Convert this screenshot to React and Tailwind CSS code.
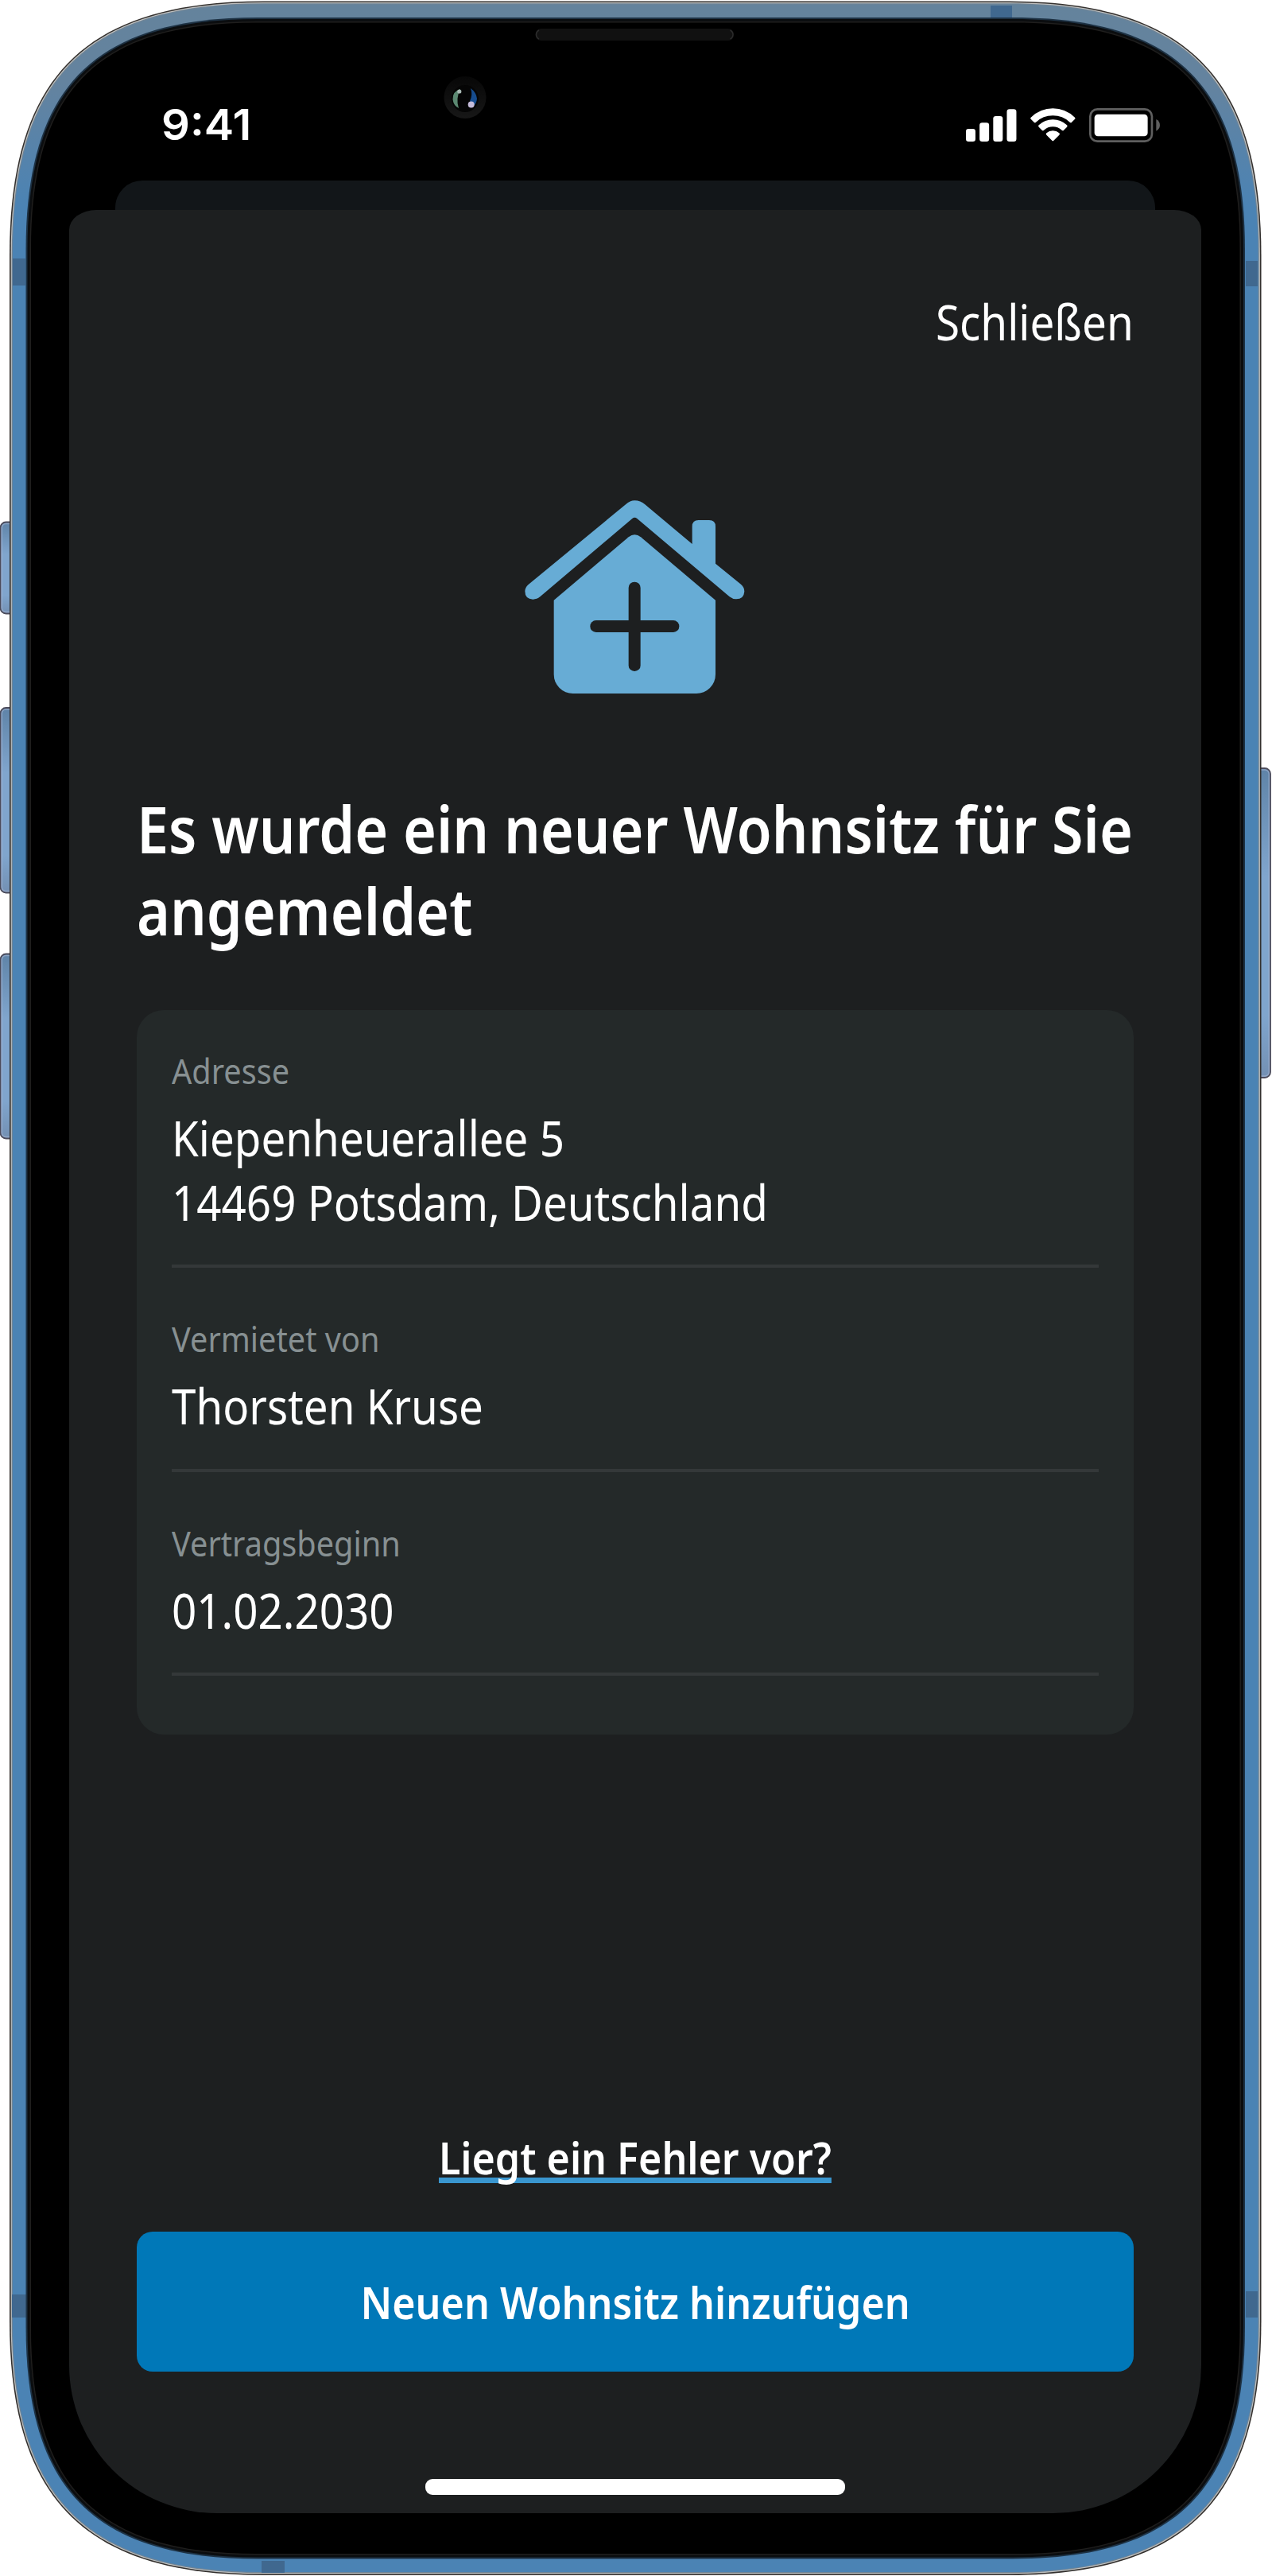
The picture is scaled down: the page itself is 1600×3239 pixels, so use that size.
const DETAILS = [
  { label: 'Adresse', lines: ['Kiepenheuerallee 5', '14469 Potsdam, Deutschland'] },
  { label: 'Vermietet von', lines: ['Thorsten Kruse'] },
  { label: 'Vertragsbeginn', lines: ['01.02.2030'] },
]

const SIDE_BUTTONS = [
  { x: 0.5, y: 656.5, height: 115 },
  { x: 0.5, y: 890, height: 232.5 },
  { x: 0.5, y: 1199.5, height: 232 },
  { x: 1574, y: 966, height: 389 },
]

const ANTENNA_BANDS = [
  { x: 16, y: 325, width: 16, height: 34 },
  { x: 1567, y: 328, width: 15, height: 32 },
  { x: 15, y: 2885, width: 18, height: 29 },
  { x: 1567, y: 2881, width: 15, height: 33 },
  { x: 1246, y: 7, width: 27, height: 17 },
  { x: 329, y: 3220, width: 29, height: 15 },
]

const BEZEL_LAYERS = [
  { inset: 0, fill: '#33302e' },
  { inset: 1.6, fill: '#bfc0bf' },
  { inset: 2.8, fill: '#6f8496' },
  { inset: 4, fill: 'url(#aluminium)' },
]

const GLASS_LAYERS = [
  { inset: 20.5, fill: '#1d3143' },
  { inset: 22.5, fill: '#0b0d0f' },
  { inset: 25.5, fill: '#1f1e1d' },
  { inset: 27, fill: '#000000' },
]

// continuous-curvature rounded rectangle, shrunk by `inset`
function contour(inset) {
  const l = 12 + inset
  const t = 1.5 + inset
  const r = 1586.5 - inset
  const b = 3238 - inset
  const e = 320 - inset * 1.35
  const k = e * 0.297
  return [
    `M${l} ${t + e}`,
    `C${l} ${t + k} ${l + k} ${t} ${l + e} ${t}`,
    `H${r - e}`,
    `C${r - k} ${t} ${r} ${t + k} ${r} ${t + e}`,
    `V${b - e}`,
    `C${r} ${b - k} ${r - k} ${b} ${r - e} ${b}`,
    `H${l + e}`,
    `C${l + k} ${b} ${l} ${b - k} ${l} ${b - e}`,
    'Z',
  ].join(' ')
}

function DeviceFrame() {
  return (
    <svg className="absolute inset-0" width="1600" height="3239" viewBox="0 0 1600 3239" aria-hidden="true">
      <defs>
        <linearGradient id="aluminium" gradientUnits="userSpaceOnUse" x1="0" y1="0" x2="0" y2="260">
          <stop offset="0" stopColor="#64839c" />
          <stop offset="0.4" stopColor="#64839f" />
          <stop offset="1" stopColor="#4b83b4" />
        </linearGradient>
        <linearGradient id="button" x1="0" y1="0" x2="0" y2="1">
          <stop offset="0" stopColor="#5f84a8" />
          <stop offset="0.35" stopColor="#80a5cd" />
          <stop offset="0.8" stopColor="#80a5cd" />
          <stop offset="1" stopColor="#7390b3" />
        </linearGradient>
        <linearGradient id="lens" x1="0" y1="0" x2="0" y2="1">
          <stop offset="0" stopColor="#070707" />
          <stop offset="1" stopColor="#171717" />
        </linearGradient>
      </defs>

      {SIDE_BUTTONS.map(b => (
        <g key={b.y}>
          <rect x={b.x} y={b.y} width="24" height={b.height} rx="7" fill="url(#button)" stroke="#4c4c5c" strokeWidth="1.8" />
          <rect x={b.x + 1.8} y={b.y + 2} width="20.4" height={b.height - 4} rx="5" fill="none" stroke="#a9b8d6" strokeWidth="1.4" opacity="0.6" />
        </g>
      ))}

      {BEZEL_LAYERS.map(layer => <path key={layer.inset} d={contour(layer.inset)} fill={layer.fill} />)}
      {ANTENNA_BANDS.map(band => <rect key={`${band.x}-${band.y}`} {...band} fill="#40688f" />)}
      {GLASS_LAYERS.map(layer => <path key={layer.inset} d={contour(layer.inset)} fill={layer.fill} />)}

      {/* speaker slot */}
      <rect x="673.5" y="36" width="249.5" height="15" rx="7" fill="#111" />
      <path d="M678 38Q674.5 40 674.5 43.5T678 49M918.5 38Q922 40 922 43.5T918.5 49" fill="none" stroke="#2c2c2c" strokeWidth="1.5" />

      {/* front camera */}
      <circle cx="585" cy="122.5" r="26.5" fill="url(#lens)" />
      <circle cx="585" cy="124" r="17" fill="#050505" />
      <path d="M579 112Q569 115 569.5 125Q570.5 133 577 136Q573 124 579 112Z" fill="#5b8871" />
      <path d="M592 111Q599 116 600 124Q599.5 130 595 134L591 127Q595 119 592 111Z" fill="#164c8e" />
      <circle cx="577.8" cy="115" r="2.6" fill="#a9bab4" />
      <circle cx="592.7" cy="131.5" r="4" fill="#c6bddb" />
    </svg>
  )
}

function SignalIcon() {
  return (
    <svg width="63.3" height="43" viewBox="343 408 190 129" fill="#fff">
      <rect x="343" y="486" width="36" height="48" rx="10" />
      <rect x="394.5" y="463" width="36" height="71" rx="10" />
      <rect x="446" y="438" width="36" height="96" rx="10" />
      <rect x="497.5" y="412" width="36" height="122" rx="10" />
    </svg>
  )
}

function WifiIcon() {
  return (
    <svg width="56.7" height="43" viewBox="585 408 170 129" fill="#fff">
      <path d="M587 443Q623 409 670 409T753 443Q756 446 753 449L741 461Q738 464 734 461Q707 436 670 436T606 461Q602 464 599 461L587 449Q584 446 587 443Z" />
      <path d="M617 472Q640 451 670 451T723 472Q727 475 723 479L711 491Q708 494 704 491Q689 478 670 478T636 491Q632 494 629 491L617 479Q613 475 617 472Z" />
      <path d="M646 502Q656 493 670 493T694 502Q698 506 694 509L673 530Q670 533 667 530L646 509Q642 506 646 502Z" />
    </svg>
  )
}

function BatteryIcon() {
  return (
    <svg width="89.3" height="43" viewBox="810 408 268 129">
      <rect x="814" y="412" width="233" height="121" rx="27" fill="none" stroke="#5f5f5f" strokeWidth="8" />
      <rect x="830" y="431" width="201" height="83" rx="13" fill="#fff" />
      <path d="M1063 450Q1077 457 1077 472T1063 494Z" fill="#5f5f5f" />
    </svg>
  )
}

function HouseIcon() {
  return (
    <svg className="mx-auto mt-[184px] block" width="278" height="246" viewBox="120 144 834 738" fill="#67acd5">
      <path d="M502 162Q517 148 535 148Q557 148 573 162L752 312V246Q752 222 776 222H816Q840 222 840 246V386L936 464Q949 475 949 491Q947 520 918 520Q904 520 893 511L544 216Q535 208 526 216L178 511Q166 521 151 521Q121 520 121 490Q122 476 133 466Z" />
      <path d="M230 524L512 286Q535 268 558 286L840 524V804A72 72 0 0 1 768 876H302A72 72 0 0 1 230 804Z" />
      <rect x="512" y="455" width="45" height="337" rx="22" fill="#1d1f20" />
      <rect x="367" y="600" width="336" height="45" rx="22" fill="#1d1f20" />
    </svg>
  )
}

function Detail({ label, lines }) {
  return (
    <div className="border-b-[4px] border-[#343839] pb-[39px]">
      <p className="origin-left scale-x-[0.912] text-[43.5px] leading-[60px] text-[#879092]">{label}</p>
      <div className="mt-[14px] origin-left scale-x-[0.875] text-[62.5px] leading-[80.5px] text-white">
        {lines.map(line => <p key={line}>{line}</p>)}
      </div>
    </div>
  )
}

export default function App() {
  return (
    <div className="relative h-[3239px] w-[1600px] overflow-hidden bg-white">
      <DeviceFrame />

      <div className="relative ml-[87px] flex h-[3160px] w-[1424px] flex-col whitespace-nowrap font-['Noto_Sans',sans-serif]">
        <header className="flex h-[227px] shrink-0 items-start justify-between pl-[116px] pr-[51.5px] pt-[126px]">
          <span className="mt-px origin-left scale-x-[1.04] font-['Inter',sans-serif] text-[54px] font-semibold leading-[60px] text-white">9:41</span>
          <div className="mt-[10px] flex gap-[17.5px]">
            <SignalIcon />
            <WifiIcon />
            <BatteryIcon />
          </div>
        </header>

        <div className="mx-[58px] h-[37px] shrink-0 rounded-t-[34px] bg-[#121619]" />

        <main className="flex grow flex-col bg-[#1d1f20] px-[85px] pb-[23px] pt-[100px] [border-radius:34px_34px_186px_186px/25px_25px_186px_186px]">
          <button className="origin-right scale-x-[0.877] self-end text-[62.5px] leading-[80px] text-white">Schließen</button>

          <HouseIcon />

          <h1 className="mt-[116px] origin-left scale-x-[0.876] text-[82px] font-semibold leading-[103px] text-white">
            Es wurde ein neuer Wohnsitz für Sie
            <br />
            angemeldet
          </h1>

          <section className="mt-[74px] flex h-[911px] flex-col gap-[59px] rounded-[34px] bg-[#242929] px-[44px] pt-[46px]">
            {DETAILS.map(detail => <Detail key={detail.label} {...detail} />)}
          </section>

          <div className="mt-auto flex flex-col items-center">
            <a
              href="#fehler"
              className="scale-x-[0.895] text-[56px] font-semibold leading-[76px] text-white underline decoration-[#3a96cf] decoration-[7px] underline-offset-[4px] [text-decoration-skip-ink:none]"
            >
              Liegt ein Fehler vor?
            </a>
            <button className="mt-[56px] flex h-[176px] w-full items-center justify-center rounded-[20px] bg-[#0078b8] text-[56px] font-semibold leading-[76px] text-white">
              <span className="scale-x-[0.895]">Neuen Wohnsitz hinzufügen</span>
            </button>
            <div className="mt-[135px] h-[20px] w-[528px] rounded-[9px] bg-white" />
          </div>
        </main>
      </div>
    </div>
  )
}
